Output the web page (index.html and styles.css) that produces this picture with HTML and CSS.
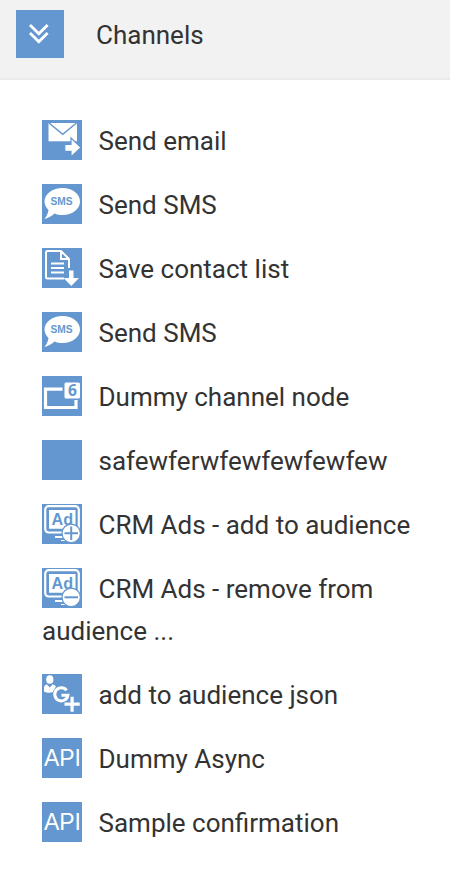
FILE: index.html
```html
<!DOCTYPE html>
<html lang="en">
<head>
<meta charset="utf-8">
<title>Channels</title>
<link rel="stylesheet" href="styles.css">
</head>
<body>
<header class="header">
  <svg class="toggle" viewBox="0 0 48 48"><path d="M14 15L22.800 23.800L31.600 15M14 23L22.800 31.800L31.600 23"/></svg>
  <span class="title">Channels</span>
</header>
<ul class="list">
  <li class="item"><svg class="icon" viewBox="0 0 40 40"><path fill="#fff" d="M6.500 3H35V21.300H6.500Z"/><path d="M7 3L20.700 14.300L34.500 3" fill="none" stroke="#6497cf" stroke-width="1.500"/><path d="M22.800 24.300H29V18L39 27.500L29 37V31.300H22.800Z" fill="#fff" stroke="#6497cf" stroke-width="1.200"/></svg>Send email</li>
  <li class="item"><svg class="icon" viewBox="0 0 40 40"><path fill="#fff" d="M20.500 4C30.500 4 38 10 38 17.500S30.500 31 20.500 31C17.500 31 15 30.500 12.500 29.500C10 32 6.500 34 2.500 35C4.500 32.500 6 29.500 6.500 26C4 23.500 2.500 20.700 2.500 17.500C2.500 10 10.500 4 20.500 4Z"/><text class="sms-text" x="19.500" y="20.700" text-anchor="middle">SMS</text></svg>Send SMS</li>
  <li class="item"><svg class="icon" viewBox="0 0 40 40"><path d="M22 30.500H5.500Q4 30.500 4 29V4.500Q4 3 5.500 3H19L27 11V20M19 3.500V11H27" fill="none" stroke="#fff" stroke-width="2"/><path d="M9 15.500H22M9 20H22M9 24.500H22" stroke="#fff" stroke-width="1.800"/><path fill="#fff" d="M27 22.500H31.500V30H37L29.300 38L21.500 30H27Z"/></svg>Save contact list</li>
  <li class="item"><svg class="icon" viewBox="0 0 40 40"><path fill="#fff" d="M20.500 4C30.500 4 38 10 38 17.500S30.500 31 20.500 31C17.500 31 15 30.500 12.500 29.500C10 32 6.500 34 2.500 35C4.500 32.500 6 29.500 6.500 26C4 23.500 2.500 20.700 2.500 17.500C2.500 10 10.500 4 20.500 4Z"/><text class="sms-text" x="19.500" y="20.700" text-anchor="middle">SMS</text></svg>Send SMS</li>
  <li class="item"><svg class="icon" viewBox="0 0 40 40"><path d="M20.500 13.200H3.500V31.500H34V24" fill="none" stroke="#fff" stroke-width="3.200"/><rect x="22.500" y="6.500" width="15.500" height="16" rx="1.500" fill="#fff"/><text class="six-text" x="30.500" y="20" text-anchor="middle">6</text></svg>Dummy channel node</li>
  <li class="item"><svg class="icon"></svg>safewferwfewfewfewfew</li>
  <li class="item"><svg class="icon" viewBox="0 0 40 40"><rect x="3.200" y="2.200" width="33.600" height="26.300" rx="3.500" fill="none" stroke="#fff" stroke-width="2.200"/><path fill="#fff" d="M7 6H33.500V24.700H7ZM13 32H24V34H13ZM19 36H27V37H19Z"/><text class="ad-text" x="9.500" y="20.700" textLength="21.500" lengthAdjust="spacingAndGlyphs">Ad</text><circle cx="29.200" cy="29.300" r="9.200" fill="#fff" stroke="#6497cf" stroke-width="1.200"/><path d="M22.500 29.300H36M29.200 22.500V36" stroke="#6497cf" stroke-width="2"/></svg>CRM Ads - add to audience</li>
  <li class="item"><svg class="icon" viewBox="0 0 40 40"><rect x="3.200" y="2.200" width="33.600" height="26.300" rx="3.500" fill="none" stroke="#fff" stroke-width="2.200"/><path fill="#fff" d="M7 6H33.500V24.700H7ZM13 32H24V34H13ZM19 36H27V37H19Z"/><text class="ad-text" x="9.500" y="20.700" textLength="21.500" lengthAdjust="spacingAndGlyphs">Ad</text><circle cx="29.200" cy="29.300" r="9.200" fill="#fff" stroke="#6497cf" stroke-width="1.200"/><path d="M22.500 29.300H36" stroke="#6497cf" stroke-width="2"/></svg>CRM Ads - remove from audience ...</li>
  <li class="item"><svg class="icon" viewBox="0 0 40 40"><ellipse cx="7.800" cy="5.500" rx="3.600" ry="4.300" fill="#fff"/><path fill="#fff" d="M2 17.500V13.500Q2 11 4.800 10.300L7.800 13.500L10.800 10.300Q13 11 14 12.500L10.500 18.300Q5 19.500 2 17.500Z"/><path d="M24.600 16.300A6.600 6.600 0 1 0 25.900 21.200H19.500" fill="none" stroke="#fff" stroke-width="3"/><path d="M22.500 30.200H37.700M30.100 22.700V37.700" stroke="#6497cf" stroke-width="5"/><path d="M22.500 30.200H37.700M30.100 22.700V37.700" stroke="#fff" stroke-width="3.200"/></svg>add to audience json</li>
  <li class="item"><svg class="icon" viewBox="0 0 40 40"><text class="api-text" x="2" y="28" textLength="37" lengthAdjust="spacingAndGlyphs">API</text></svg>Dummy Async</li>
  <li class="item"><svg class="icon" viewBox="0 0 40 40"><text class="api-text" x="2" y="28" textLength="37" lengthAdjust="spacingAndGlyphs">API</text></svg>Sample confirmation</li>
</ul>
</body>
</html>
```

FILE: styles.css
```css
body {
  margin: 0;
  background: #fff;
  color: #333;
  font: 26px/42px Roboto, sans-serif;
}

.header {
  display: flex;
  box-sizing: border-box;
  height: 80px;
  padding: 10px 16px;
  gap: 32px;
  background: #f2f2f2;
  border-bottom: 2px solid #eaeaea;
}

.toggle {
  width: 48px;
  height: 48px;
  background: #6497cf;
  fill: none;
  stroke: #fff;
  stroke-width: 2.8;
}

.title {
  line-height: 50px;
}

.list {
  margin: 0;
  padding: 28px 36px 0 42px;
  list-style: none;
}

.item {
  padding: 12px 0 10px;
}

.icon {
  display: inline-block;
  width: 40px;
  height: 40px;
  margin-right: 16.5px;
  vertical-align: top;
  background: #6497cf;
}

.sms-text,
.ad-text,
.six-text {
  fill: #6497cf;
  font-family: "Liberation Sans", sans-serif;
  font-weight: bold;
}

.sms-text {
  font-size: 10.2px;
}

.ad-text {
  font-size: 17px;
}

.six-text {
  font-family: "Open Sans", sans-serif;
  font-size: 15.500px;
}

.api-text {
  fill: #fff;
  font-family: "Liberation Sans", sans-serif;
  font-size: 23px;
}
```
